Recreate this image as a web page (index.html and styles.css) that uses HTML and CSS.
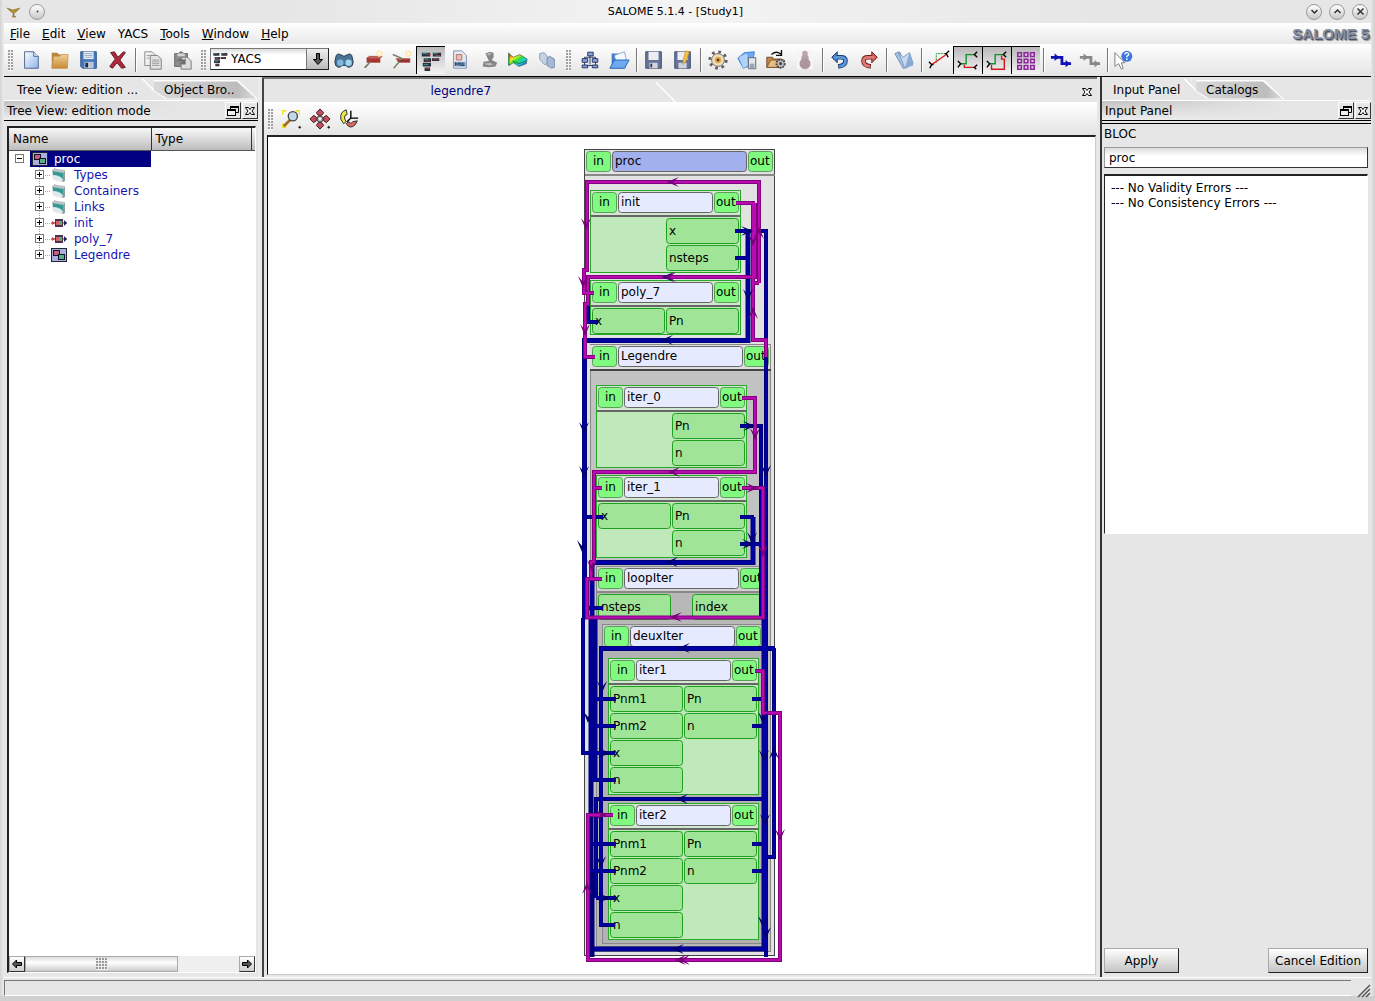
FILE: index.html
```html
<!DOCTYPE html>
<html lang="en">
<head>
<meta charset="utf-8">
<title>SALOME 5.1.4 - [Study1]</title>
<link rel="stylesheet" href="styles.css">
</head>
<body>
<svg class="defs" width="0" height="0" aria-hidden="true">
  <defs>
    <linearGradient id="gBlue" x1="0" y1="0" x2="1" y2="1"><stop offset="0" stop-color="#fff"/><stop offset="1" stop-color="#8ab4ea"/></linearGradient>
    <linearGradient id="gFolder" x1="0" y1="0" x2="0" y2="1"><stop offset="0" stop-color="#f0d09a"/><stop offset="1" stop-color="#c98a34"/></linearGradient>
    <linearGradient id="gRain" x1="0" y1="0" x2="1" y2="1"><stop offset="0" stop-color="#e22"/><stop offset=".3" stop-color="#ee2"/><stop offset=".5" stop-color="#2d4"/><stop offset=".7" stop-color="#2ce"/><stop offset="1" stop-color="#22c"/></linearGradient>
    <symbol id="folderTeal" viewBox="0 0 16 16"><path d="M1 3l3-2 2 1 8 1v11l-3 1L2 12z" fill="#b9c4c2"/><path d="M2 4l9 2v9l-9-3z" fill="#e2eae8"/><path d="M2 4l10 2v6Q8 8 2 8z" fill="#349a92"/><path d="M12 6l2-2v10l-2 1z" fill="#8ea19e"/></symbol>
    <symbol id="nodeIcon" viewBox="0 0 16 16"><path d="M0 8h16" stroke="#733"/><path d="M1 6l3 2-3 2z" fill="#c04048"/><path d="M13 5l3 3-3 3z" fill="#202060"/><rect x="4" y="4" width="8" height="8" fill="#503050"/><rect x="5" y="6" width="3" height="4" fill="#d86060"/><rect x="8" y="6" width="3" height="4" fill="#58b070"/></symbol>
    <symbol id="blocIcon" viewBox="0 0 16 16"><rect x=".5" y="1.5" width="15" height="13" fill="#a9b0de" stroke="#223"/><rect x="2.500" y="3.500" width="6" height="5" fill="#c46070" stroke="#113"/><rect x="7.500" y="7.500" width="6" height="5" fill="#58b080" stroke="#113"/></symbol>
    <symbol id="floatIcon" viewBox="0 0 12 12"><path d="M3.500 4V1.500h8v6h-3" fill="none" stroke="#000"/><rect x=".5" y="4.500" width="8" height="6" fill="#eee" stroke="#000"/><path d="M0 5h9M3 2h9" stroke="#000" stroke-width="2"/></symbol>
    <symbol id="closeIcon" viewBox="0 0 12 12"><path d="M1.500 2.500h3L6 4.500l1.500-2h3L8 6l2.500 3.500h-3L6 7.500l-1.500 2h-3L4 6z" fill="#fff" stroke="#000"/></symbol>
    <symbol id="meshIcon" viewBox="0 0 24 24"><path d="M2 3h9v4H2zM14 3h9v4h-9zM4 9h8v4H4zM13 9h8v3h-8zM3 14h9v4H3zM5 19h6v4H5z" fill="#27333c"/><path d="M3 4h5M15 4h4M5 10h4M4 16h5" stroke="#3fa0a0"/><path d="M8 5h4M17 6h5M6 12h5M14 10h6M6 20h5" stroke="#b03848"/></symbol>
  </defs>
</svg>
<div class="window">
  <header class="titlebar">
    <svg class="app-icon" width="14" height="14" viewBox="0 0 14 14"><path d="M0 3l6 2 7-2-4 4-2 1v3l2 1H5l1-1V8L3 6z" fill="#b8902c" stroke="#7a5c18" stroke-width=".5"/></svg>
    <button class="round" aria-label="Window menu"><svg width="13" height="13"><circle cx="6.500" cy="6.500" r="1" fill="#444"/></svg></button>
    <h1>SALOME 5.1.4 - [Study1]</h1>
    <button class="round" aria-label="Minimize"><svg width="13" height="13"><path d="M3.500 5l3 3 3-3" fill="none" stroke="#333" stroke-width="1.500"/></svg></button>
    <button class="round" aria-label="Maximize"><svg width="13" height="13"><path d="M3.500 8l3-3 3 3" fill="none" stroke="#333" stroke-width="1.500"/></svg></button>
    <button class="round" aria-label="Close"><svg width="13" height="13"><path d="M3.500 3.500l6 6m0-6l-6 6" fill="none" stroke="#333" stroke-width="1.500"/></svg></button>
  </header>

  <nav class="menubar">
    <a href="#"><u>F</u>ile</a><a href="#"><u>E</u>dit</a><a href="#"><u>V</u>iew</a><a href="#">YACS</a><a href="#"><u>T</u>ools</a><a href="#"><u>W</u>indow</a><a href="#"><u>H</u>elp</a>
    <span class="brand">SALOME 5</span>
  </nav>

  <div class="toolbar">
    <span class="handle first"></span>
    <button aria-label="New"><svg viewBox="0 0 24 24"><path d="M5 3h10l5 5v13H5z" fill="url(#gBlue)" stroke="#4c5e86"/><path d="M15 3v5h5" fill="#dfeafc" stroke="#4c5e86"/></svg></button>
    <button aria-label="Open"><svg viewBox="0 0 24 24"><path d="M3 4h6l2 2h9v15H3z" fill="#b9853c"/><path d="M5 8h7l2-2h7l-1 15H3z" fill="url(#gFolder)" stroke="#c08a40" stroke-width=".6"/></svg></button>
    <button aria-label="Save"><svg viewBox="0 0 24 24"><path d="M3 3h17v18H5l-2-2z" fill="#4478bd" stroke="#2d5187"/><path d="M6 3h11v8H6z" fill="#eef3fa"/><path d="M7 5h9M7 7h9M7 9h9" stroke="#8fa6c5"/><path d="M7 14h10v7H7z" fill="#bcc8d6"/><path d="M8 15h3v5H8z" fill="#1c2a44"/></svg></button>
    <button aria-label="Delete"><svg viewBox="0 0 24 24"><path d="M4 4l4-1 4 6 6-6 2 1-6 8 6 8-4 1-5-6-5 6-3-2 6-8z" fill="#b3283c" stroke="#56121c"/></svg></button>
    <span class="sep"></span>
    <button aria-label="Copy"><svg viewBox="0 0 24 24"><path d="M3 3h8l3 3v12H3z" fill="#f0f0f0" stroke="#888"/><path d="M9 7h8l4 4v11H9z" fill="#e4e4e4" stroke="#777"/><path d="M5 7h4M5 10h3M11 12h8M11 14h8M11 16h8M11 18h8" stroke="#999"/></svg></button>
    <button aria-label="Paste"><svg viewBox="0 0 24 24"><path d="M4 5h4q3-4 6 0h4v14H4z" fill="#8d8d8d" stroke="#666"/><path d="M7 5h8v3H7z" fill="#d5d5d5"/><path d="M11 9h7l4 4v9H11z" fill="#ddd" stroke="#777"/><path d="M5 14q5-6 9-2l2-2v7H9l3-3q-4-2-7 0z" fill="#707070"/></svg></button>
    <span class="handle"></span>
    <div class="module">
      <svg viewBox="0 0 24 24"><use href="#meshIcon"/></svg>
      <select aria-label="Module"><option>YACS</option></select>
      <span class="drop"><svg width="14" height="14" viewBox="0 0 14 14"><path d="M5.500 1.500h3v6h3L7 12.500 2.500 7.500h3z" fill="#555" stroke="#000"/></svg></span>
    </div>
    <button aria-label="Study"><svg viewBox="0 0 24 24"><path d="M3 9q1-5 5-3l4 2 4-2q4-2 5 3l1 5q0 5-4 6-3 0-4-2h-4q-1 2-4 2-4-1-4-6z" fill="#4c7393" stroke="#22384c"/><circle cx="8" cy="15" r="3.500" fill="#7db8dc"/><circle cx="17" cy="15" r="3.500" fill="#9cd4ee"/></svg></button>
    <button aria-label="Geometry"><svg viewBox="0 0 24 24"><path d="M5 10h15v5H5z" fill="#b33a34"/><path d="M5 10l3-2h14l-2 2zM6 13h13" fill="#db6f62" stroke="#7a2420" stroke-width=".6"/><path d="M2 20l7-7 1 1-6 7z" fill="#778062"/><circle cx="19" cy="5" r="3.500" fill="#ffe7b0"/><circle cx="19" cy="5" r="1.500" fill="#fff"/></svg></button>
    <button aria-label="Mesh"><svg viewBox="0 0 24 24"><path d="M5 10h16v5H8z" fill="#b3463e"/><path d="M2 6l9 4-3 5-5 6" stroke="#778062" fill="none" stroke-width="1.500"/><path d="M8 13h12" stroke="#5e2420"/><circle cx="19" cy="5" r="3.500" fill="#ffe7b0"/><circle cx="19" cy="5" r="1.500" fill="#fff"/></svg></button>
    <button class="on" aria-label="YACS module"><svg viewBox="0 0 24 24"><use href="#meshIcon"/></svg></button>
    <button aria-label="MED"><svg viewBox="0 0 24 24"><path d="M5 2h9l5 5v14H5z" fill="#e4e9f2" stroke="#7c8dac"/><path d="M8 6h6v6H8z" fill="#e5bdb7" stroke="#b96e64"/><path d="M6 14h12v5H6z" fill="#7898bd"/><path d="M7 18v-3l2 2 2-2v3M13 15v3h1M15 15v3h2" fill="none" stroke="#1c365e"/></svg></button>
    <button aria-label="Light"><svg viewBox="0 0 24 24"><path d="M8 5l5-2 4 1v5l-2 3 6 3-2 4-7 1-7-1 1-5 6-1z" fill="#858585"/><path d="M9 6l4-2 2 1-3 2zM6 16l7-1 4 2-5 1z" fill="#bbb"/></svg></button>
    <button aria-label="Post-Pro"><svg viewBox="0 0 24 24"><path d="M2 5l5 4 7-3 8 5-1 5-8 3-6-4-5 3z" fill="url(#gRain)" stroke="#333" stroke-width=".6"/><path d="M2 4v14M6 13l7 3 8-3" stroke="#157a35" fill="none"/></svg></button>
    <button aria-label="Hexa"><svg viewBox="0 0 24 24"><path d="M4 5l5-1 4 5v7l-4 1-5-6z" fill="#c5d2e2" stroke="#899cb5"/><path d="M12 10l3-2 5 3v9l-3 1-5-3z" fill="#a6bad5" stroke="#7388a5"/></svg></button>
    <span class="handle"></span>
    <button aria-label="New schema"><svg viewBox="0 0 24 24"><path d="M12 7v10M6 11v-2h12v2M6 13v5h12v-5" stroke="#26345c" fill="none"/><path d="M9.500 3.500h6v4h-6zM3.500 10.500h6v4h-6zM14.500 10.500h6v4h-6zM3.500 17.500h6v3h-6zM14.500 17.500h6v3h-6z" fill="#8aa2dc" stroke="#1c2c5c"/></svg></button>
    <button aria-label="Open schema"><svg viewBox="0 0 24 24"><path d="M4 5h7l2 2h6v14H4z" fill="#437cc5"/><path d="M7 7l11-4 2 9-11 3z" fill="#f4f8ff" stroke="#8fa9cf"/><path d="M2 21l5-9h16l-5 9z" fill="#6eaaf0" stroke="#2461b5"/></svg></button>
    <span class="sep"></span>
    <button aria-label="Save schema"><svg viewBox="0 0 24 24"><path d="M3 3h17v18H3z" fill="#66749a" stroke="#3b4668"/><path d="M6 3h11v9H6z" fill="#ececf1"/><path d="M7 15h9v6H7z" fill="#d1d4df"/><path d="M8 16h2v4H8z" fill="#334"/></svg></button>
    <button aria-label="Save schema as"><svg viewBox="0 0 24 24"><path d="M3 3h17v18H3z" fill="#66749a" stroke="#3b4668"/><path d="M6 3h11v9H6z" fill="#ececf1"/><path d="M7 15h9v6H7z" fill="#d1d4df"/><path d="M15 2l4 1-4 11-3 3v-5z" fill="#f5c044" stroke="#b9821c" stroke-width=".6"/></svg></button>
    <span class="sep"></span>
    <button aria-label="Run"><svg viewBox="0 0 24 24"><circle cx="12" cy="12" r="9" fill="none" stroke="#5e5e5e" stroke-width="3" stroke-dasharray="3 4.069"/><circle cx="12" cy="12" r="7" fill="#efdfb8" stroke="#666"/><circle cx="12" cy="12" r="3.500" fill="#d9a848"/><circle cx="12" cy="12" r="1.500" fill="#7a2010"/></svg></button>
    <button aria-label="Load state"><svg viewBox="0 0 24 24"><path d="M2 10l7-6 11-1-2 14-10 4z" fill="#6daaf2" stroke="#3d7dcf"/><path d="M3 9l9-4 1 13-5 3z" fill="#b0d3fb"/><path d="M13.500 9.500h8v12h-8z" fill="#e3e5ea" stroke="#58606e"/><path d="M15 16h5v5h-5z" fill="#9aa5b8"/></svg></button>
    <button aria-label="Batch"><svg viewBox="0 0 24 24"><path d="M2 9h6l2 2h8v9H2z" fill="#c08a50" stroke="#6a431b"/><path d="M6 12h15l-4 8H2z" fill="#e7bd84" stroke="#7a5226"/><path d="M7 6q6-5 11 0M18 1v6h-6" fill="none" stroke="#111" stroke-width="1.500"/><circle cx="17" cy="16" r="4.500" fill="#bbb" stroke="#444" stroke-width="2" stroke-dasharray="2 1"/><circle cx="17" cy="16" r="1.500" fill="#333"/></svg></button>
    <button aria-label="Watch"><svg viewBox="0 0 24 24"><path d="M3 2h18v20H3z" fill="#f8f3f4"/><circle cx="12" cy="5" r="3" fill="#baa7ad"/><circle cx="12" cy="10" r="4" fill="#b7a0a7"/><circle cx="12" cy="16" r="6" fill="#ae969e"/></svg></button>
    <span class="sep"></span>
    <button aria-label="Undo"><svg viewBox="0 0 24 24"><path d="M5 9h8q5 0 5 4 0 5-8 6" fill="none" stroke="#173a6e" stroke-width="5"/><path d="M9 3v12L3 9z" fill="#467fc4" stroke="#173a6e"/><path d="M6 9h7q5 0 5 4 0 5-7 6" fill="none" stroke="#5b97da" stroke-width="3"/></svg></button>
    <button aria-label="Redo"><svg viewBox="0 0 24 24"><path d="M19 9h-8q-5 0-5 4 0 5 8 6" fill="none" stroke="#701c1c" stroke-width="5"/><path d="M15 3v12l6-6z" fill="#d05a58" stroke="#701c1c"/><path d="M18 9h-7q-5 0-5 4 0 5 7 6" fill="none" stroke="#e07a74" stroke-width="3"/></svg></button>
    <span class="sep"></span>
    <button aria-label="Catalog"><svg viewBox="0 0 24 24"><path d="M2 5l5-2 9 17-5 1z" fill="#a5c1e4" stroke="#6d8cb7"/><path d="M6 4l5 5 7-5 4 12-9 5z" fill="#c7daf2" stroke="#7895bd"/><path d="M18 4l4 14-9 3z" fill="#88a9d5"/></svg></button>
    <span class="sep"></span>
    <button aria-label="Straight links"><svg viewBox="0 0 24 24"><path d="M9 15V5h9" stroke="#109020" stroke-dasharray="2 1" fill="none"/><path d="M4 17L20 6" stroke="#e21c1c" stroke-width="1.500"/><path d="M1 14l3 3-2 4M4 17h2M23 2l-3 3 2 4M18 5h3" stroke="#000" stroke-width="1.500" fill="none"/></svg></button>
    <button class="on" aria-label="Control links"><svg viewBox="0 0 24 24"><path d="M4 15h6V5h9" stroke="#109030" stroke-width="1.500" fill="none"/><path d="M8 16v3h11" stroke="#d01818" stroke-width="1.500" fill="none"/><path d="M1 12l3 3-3 4M22 2l-3 3 3 3M22 16l-3 3 2 2" stroke="#000" fill="none" stroke-width="1.500"/></svg></button>
    <button class="on" aria-label="Data links"><svg viewBox="0 0 24 24"><path d="M4 15h6V5h9" stroke="#109030" stroke-width="1.500" fill="none"/><path d="M6 16v5h14V10h-3V6" stroke="#d01818" stroke-width="1.500" fill="none"/><path d="M1 12l3 3-3 4M22 2l-3 3 3 3" stroke="#000" fill="none" stroke-width="1.500"/></svg></button>
    <button class="on" aria-label="Grid"><svg viewBox="0 0 24 24"><path d="M3 3h4v4H3zM10 3h4v4h-4zM17 3h4v4h-4zM3 10h4v4H3zM10 10h4v4h-4zM17 10h4v4h-4zM3 17h4v4H3zM10 17h4v4h-4zM17 17h4v4h-4z" fill="#e8c8e8" stroke="#8a2898" stroke-width="1.700"/></svg></button>
    <span class="sep"></span>
    <button aria-label="Emphasize links"><svg viewBox="0 0 24 24"><path d="M1 9h12v7h10" stroke="#1010b8" stroke-width="3" fill="none"/><path d="M5 5l5 4-5 4zM17 12l5 4-5 4z" fill="#1010b8"/></svg></button>
    <button aria-label="De-emphasize links"><svg viewBox="0 0 24 24"><path d="M1 9h12v7h10" stroke="#888" stroke-width="3" fill="none"/><path d="M5 5l5 4-5 4zM17 12l5 4-5 4z" fill="#888"/></svg></button>
    <span class="sep"></span>
    <button aria-label="What's this"><svg viewBox="0 0 24 24"><path d="M1 4v15l4-3 3 6 2-1-2-6h4z" fill="#fff" stroke="#777"/><circle cx="14" cy="8" r="6" fill="#3d78e0"/><path d="M12 6q0-2 2-2t2 2q0 1-2 2v1M14 10v2" stroke="#fff" stroke-width="1.500" fill="none"/></svg></button>
  </div>

  <main class="work">
    <aside class="dock">
      <div class="tabs">
        <button class="tab active wide">Tree View: edition ...</button>
        <button class="tab"><span>Object Bro..</span></button>
      </div>
      <div class="dock-title"><h2>Tree View: edition mode</h2>
        <button aria-label="Float"><svg width="12" height="12"><use href="#floatIcon"/></svg></button>
        <button aria-label="Close"><svg width="12" height="12"><use href="#closeIcon"/></svg></button></div>
      <div class="tree">
        <table>
          <thead><tr><th class="name">Name</th><th>Type</th><th class="rest"></th></tr></thead>
          <tbody>
            <tr class="root"><td><span class="row"><i class="box minus"></i><span class="sel"><svg width="16" height="16"><use href="#blocIcon"/></svg>proc</span></span></td><td></td><td></td></tr>
            <tr><td><span class="row sub"><i class="box"></i><svg width="16" height="16"><use href="#folderTeal"/></svg>Types</span></td><td></td><td></td></tr>
            <tr><td><span class="row sub"><i class="box"></i><svg width="16" height="16"><use href="#folderTeal"/></svg>Containers</span></td><td></td><td></td></tr>
            <tr><td><span class="row sub"><i class="box"></i><svg width="16" height="16"><use href="#folderTeal"/></svg>Links</span></td><td></td><td></td></tr>
            <tr><td><span class="row sub"><i class="box"></i><svg width="16" height="16"><use href="#nodeIcon"/></svg>init</span></td><td></td><td></td></tr>
            <tr><td><span class="row sub"><i class="box"></i><svg width="16" height="16"><use href="#nodeIcon"/></svg>poly_7</span></td><td></td><td></td></tr>
            <tr><td><span class="row sub last"><i class="box"></i><svg width="16" height="16"><use href="#blocIcon"/></svg>Legendre</span></td><td></td><td></td></tr>
          </tbody>
        </table>
        <div class="hscroll">
          <button aria-label="Scroll left"><svg width="12" height="12"><path d="M1.500 6l4-4v2.500h5v3h-5V10z" fill="#555" stroke="#000"/></svg></button>
          <span class="thumb"><i></i></span>
          <button aria-label="Scroll right"><svg width="12" height="12"><path d="M10.500 6l-4-4v2.500h-5v3h5V10z" fill="#555" stroke="#000"/></svg></button>
        </div>
      </div>
    </aside>

    <section class="view">
      <div class="view-tabs">
        <button class="view-tab">legendre7</button>
        <svg class="slant" width="20" height="24"><path d="M0 3.500l20 20" stroke="#fff" stroke-width="1.500"/></svg>
        <button class="view-close" aria-label="Close view"><svg width="12" height="12"><use href="#closeIcon"/></svg></button>
      </div>
      <div class="view-tools">
        <span class="handle first"></span>
        <button aria-label="Zoom"><svg viewBox="0 0 24 24"><path d="M3 7V3h4M17 3h4v4M3 17v4h4" fill="none" stroke="#eee018" stroke-width="1.500"/><path d="M4 20l7-7" stroke="#a36a28" stroke-width="3"/><circle cx="14" cy="9" r="5" fill="#bfdaea" stroke="#444" stroke-width="1.500"/><path d="M20 21h3M21.500 19.500v3" stroke="#000"/></svg></button>
        <button aria-label="Pan"><svg viewBox="0 0 24 24"><path d="M12 1l4 4-2 3h-4L8 5zM12 23l4-4-2-3h-4l-2 3zM1 12l4-4 3 2v4l-3 2zM23 12l-4-4-3 2v4l3 2z" fill="#c24e5c" stroke="#3a1218"/><path d="M9.500 9.500h5v5h-5z" fill="#eee" stroke="#222"/><path d="M20 21h3M21.500 19.500v3" stroke="#000"/></svg></button>
        <button aria-label="Rotate"><svg viewBox="0 0 24 24"><path d="M9 2q-7 2-6 10l3 5 3-2-2-4q0-4 3-4z" fill="#ece646" stroke="#222"/><path d="M9 17q4 7 10 1l2-4-5 1-2 2-2-2z" fill="#e06a5c" stroke="#222"/><path d="M14 3v8h8M14 11l-4 4" fill="none" stroke="#000" stroke-width="1.500"/></svg></button>
      </div>
      <div class="canvas">
        <svg class="schema" width="221" height="830" viewBox="571 140 221 830">
          <defs>
            <rect id="pin" x=".5" y=".5" width="24" height="20" rx="3"/>
            <rect id="cell" x=".5" y=".5" width="72" height="25" rx="3"/>
            <rect id="label" x=".5" y=".5" width="94" height="20" rx="3"/>
            <path id="al" d="M6-5L-6 0 6 5 0 0z"/>
            <g id="flow">
              <path d="M736 203h19M755 203v74H588v27h-3v53h10M736 203h17v80M759 283V182H587v88h-3v23h10M759 283h-6v57h13v17M742 398h13v74H594v90h-3v18M594 488h8M742 488h21v129.500H587V579h15M755 671h8v42h17v247H588V815h25"/>
            </g>
            <g id="dataThin">
              <path d="M735 231h31v726M735 258h13M588 290v32h10M583 618v135h32M740 426h21v191M586 517h17M740 517h14M740 544h22M586 608h17M601 648v277h14M774 648v209h-9M596 898V799h168M590 699h26M590 726h26M591 780h25M752 699h12M752 726h12M590 844h26M590 871h26M596 898h20M752 844h12M752 871h12"/>
            </g>
            <g id="dataWide">
              <path d="M748 231v109.500H584.500V618M753 517v45.500H592V620M599 648.500h176M764 618v332M594 949h171"/>
            </g>
          </defs>

          <g class="bloc">
            <rect x="584.500" y="149.500" width="190" height="806" fill="#e2e2e2" stroke="#444"/><path d="M585 175h190"/>
            <rect x="590.500" y="344.500" width="180" height="607" fill="#c2c2c2"/><path d="M590 345h180v25H590z" fill="#dedede" stroke="none"/><path d="M590 370h181" stroke="#444"/>
            <rect x="596.500" y="566.500" width="168" height="380" fill="#b8b8b8"/><path d="M597 567h167v25H597z" fill="#d0d0d0" stroke="none"/><path d="M597 592h167"/>
            <rect x="602.500" y="624.500" width="160" height="319" fill="#b2b2b2"/><path d="M603 625h159v24H603z" fill="#cacaca" stroke="none"/>
          </g>
          <g class="node">
            <rect x="590.500" y="190.500" width="150" height="82"/><rect x="590.500" y="280.500" width="150" height="54"/><rect x="596.500" y="385.500" width="150" height="82"/><rect x="596.500" y="475.500" width="150" height="82"/><rect x="608.500" y="658.500" width="150" height="136"/><rect x="608.500" y="803.500" width="150" height="136"/>
          </g>
          <g class="band">
            <path d="M591 191h149v25H591zM591 281h149v25H591zM597 386h149v25H597zM597 476h149v25H597zM609 659h149v25H609zM609 804h149v25H609z"/>
          </g>
          <path class="rule" d="M591 216h149M591 306h149M597 411h149M597 501h149M609 684h149M609 829h149"/>
          <g class="pins">
            <use href="#pin" x="586" y="151"/><use href="#pin" x="748" y="151"/>
            <use href="#pin" x="592" y="192"/><use href="#pin" x="714" y="192"/>
            <use href="#pin" x="592" y="282"/><use href="#pin" x="714" y="282"/>
            <use href="#pin" x="592" y="346"/><use href="#pin" x="744" y="346"/>
            <use href="#pin" x="598" y="387"/><use href="#pin" x="720" y="387"/>
            <use href="#pin" x="598" y="477"/><use href="#pin" x="720" y="477"/>
            <use href="#pin" x="598" y="568"/><use href="#pin" x="740" y="568"/>
            <use href="#pin" x="604" y="626"/><use href="#pin" x="736" y="626"/>
            <use href="#pin" x="610" y="660"/><use href="#pin" x="732" y="660"/>
            <use href="#pin" x="610" y="805"/><use href="#pin" x="732" y="805"/>
          </g>
          <g class="labels">
            <rect x="612.500" y="151.500" width="134" height="20" rx="3" fill="#a2b0ee"/>
            <use href="#label" x="618" y="192"/><use href="#label" x="618" y="282"/>
            <rect x="618.500" y="346.500" width="124" height="20" rx="3"/>
            <use href="#label" x="624" y="387"/><use href="#label" x="624" y="477"/>
            <rect x="624.500" y="568.500" width="114" height="20" rx="3"/>
            <rect x="630.500" y="626.500" width="104" height="20" rx="3"/>
            <use href="#label" x="636" y="660"/><use href="#label" x="636" y="805"/>
          </g>
          <g class="cells">
            <use href="#cell" x="666" y="218"/><use href="#cell" x="666" y="245"/>
            <use href="#cell" x="592" y="308"/><use href="#cell" x="666" y="308"/>
            <use href="#cell" x="672" y="413"/><use href="#cell" x="672" y="440"/>
            <use href="#cell" x="598" y="503"/><use href="#cell" x="672" y="503"/><use href="#cell" x="672" y="530"/>
            <use href="#cell" x="598" y="594"/><use href="#cell" x="692" y="594"/>
            <use href="#cell" x="610" y="686"/><use href="#cell" x="684" y="686"/><use href="#cell" x="610" y="713"/><use href="#cell" x="684" y="713"/><use href="#cell" x="610" y="740"/><use href="#cell" x="610" y="767"/>
            <use href="#cell" x="610" y="831"/><use href="#cell" x="684" y="831"/><use href="#cell" x="610" y="858"/><use href="#cell" x="684" y="858"/><use href="#cell" x="610" y="885"/><use href="#cell" x="610" y="912"/>
          </g>
          <g class="captions">
            <text x="593" y="165">in</text><text x="615" y="165">proc</text><text x="750" y="165">out</text>
            <text x="599" y="206">in</text><text x="621" y="206">init</text><text x="716" y="206">out</text>
            <text x="669" y="235">x</text><text x="669" y="262">nsteps</text>
            <text x="599" y="296">in</text><text x="621" y="296">poly_7</text><text x="716" y="296">out</text>
            <text x="595" y="325">x</text><text x="669" y="325">Pn</text>
            <text x="599" y="360">in</text><text x="621" y="360">Legendre</text><text x="746" y="360">out</text>
            <text x="605" y="401">in</text><text x="627" y="401">iter_0</text><text x="722" y="401">out</text>
            <text x="675" y="430">Pn</text><text x="675" y="457">n</text>
            <text x="605" y="491">in</text><text x="627" y="491">iter_1</text><text x="722" y="491">out</text>
            <text x="601" y="520">x</text><text x="675" y="520">Pn</text><text x="675" y="547">n</text>
            <text x="605" y="582">in</text><text x="627" y="582">loopIter</text><text x="742" y="582">out</text>
            <text x="601" y="611">nsteps</text><text x="695" y="611">index</text>
            <text x="611" y="640">in</text><text x="633" y="640">deuxIter</text><text x="738" y="640">out</text>
            <text x="617" y="674">in</text><text x="639" y="674">iter1</text><text x="734" y="674">out</text>
            <text x="613" y="703">Pnm1</text><text x="687" y="703">Pn</text><text x="613" y="730">Pnm2</text><text x="687" y="730">n</text><text x="613" y="757">x</text><text x="613" y="784">n</text>
            <text x="617" y="819">in</text><text x="639" y="819">iter2</text><text x="734" y="819">out</text>
            <text x="613" y="848">Pnm1</text><text x="687" y="848">Pn</text><text x="613" y="875">Pnm2</text><text x="687" y="875">n</text><text x="613" y="902">x</text><text x="613" y="929">n</text>
          </g>
          <use href="#dataThin" class="wire data-edge"/><use href="#dataWide" class="wire data-edge wide"/>
          <path class="wire bundle" d="M593 618v162"/><path class="wire data-edge wide" d="M591 780v90l1 1v86"/>
          <use href="#dataThin" class="wire data-core"/><use href="#dataWide" class="wire data-core wide"/>
          <use href="#flow" class="wire flow-edge"/><use href="#flow" class="wire flow-core"/>
          <g fill="#000070">
            <use href="#al" x="667" y="340"/><use href="#al" x="672" y="562"/><use href="#al" x="684" y="648"/><use href="#al" x="682" y="799"/><use href="#al" x="678" y="949"/><use href="#al" x="668" y="277"/>
            <use href="#al" transform="translate(584 428) rotate(-90)"/><use href="#al" transform="translate(584 472) rotate(-90)"/><use href="#al" transform="translate(582 546) rotate(-90)"/><use href="#al" transform="translate(748 295) rotate(-90)"/><use href="#al" transform="translate(766 471) rotate(-90)"/><use href="#al" transform="translate(588 717) rotate(-90)"/><use href="#al" transform="translate(602 687) rotate(-90)"/><use href="#al" transform="translate(763 718) rotate(-90)"/><use href="#al" transform="translate(764 756) rotate(-90)"/><use href="#al" transform="translate(774 753) rotate(90)"/><use href="#al" transform="translate(765 820) rotate(-90)"/><use href="#al" transform="translate(601 862) rotate(-90)"/><use href="#al" transform="translate(763 922) rotate(-90)"/><use href="#al" transform="translate(766 933) rotate(-90)"/><use href="#al" transform="translate(752 538) rotate(-90)"/>
            <use href="#al" transform="translate(749 426) rotate(180)"/><use href="#al" transform="translate(747 231) rotate(180)"/><use href="#al" transform="translate(748 544) rotate(180)"/><use href="#al" transform="translate(604 753) rotate(180)"/><use href="#al" transform="translate(604 898) rotate(180)"/>
          </g>
          <g fill="#780078">
            <use href="#al" x="673" y="182"/><use href="#al" x="670" y="277"/><use href="#al" x="674" y="472"/><use href="#al" x="676" y="617"/><use href="#al" x="680" y="960"/><use href="#al" x="684" y="960"/>
            <use href="#al" transform="translate(586 224) rotate(-90)"/><use href="#al" transform="translate(583 282) rotate(-90)"/><use href="#al" transform="translate(585 330) rotate(-90)"/><use href="#al" transform="translate(753 240) rotate(-90)"/><use href="#al" transform="translate(755 434) rotate(-90)"/><use href="#al" transform="translate(780 835) rotate(-90)"/><use href="#al" transform="translate(592 566) rotate(-90)"/><use href="#al" transform="translate(763 551) rotate(-90)"/>
            <use href="#al" transform="translate(753 313) rotate(90)"/><use href="#al" transform="translate(759 233) rotate(90)"/><use href="#al" transform="translate(587 888) rotate(90)"/><use href="#al" transform="translate(752 488) rotate(180)"/><use href="#al" transform="translate(601 815) rotate(180)"/>
          </g>
        </svg>
      </div>
    </section>

    <aside class="dock right">
      <div class="tabs">
        <button class="tab active">Input Panel</button>
        <button class="tab short"><span>Catalogs</span></button>
      </div>
      <div class="dock-title"><h2>Input Panel</h2>
        <button aria-label="Float"><svg width="12" height="12"><use href="#floatIcon"/></svg></button>
        <button aria-label="Close"><svg width="12" height="12"><use href="#closeIcon"/></svg></button></div>
      <form class="panel">
        <label for="bloc">BLOC</label>
        <input id="bloc" type="text" value="proc">
        <textarea aria-label="Errors" readonly>--- No Validity Errors ---
--- No Consistency Errors ---</textarea>
        <div class="actions"><button type="button" class="apply">Apply</button><button type="button" class="cancel">Cancel Edition</button></div>
      </form>
    </aside>
  </main>
  <footer class="status"><span></span><svg width="14" height="18"><path d="M1 17L13 5M5 17l8-8M9 17l4-4" stroke="#555" stroke-width="1.500"/></svg></footer>
</div>
</body>
</html>
```
FILE: styles.css
```css
* { box-sizing: border-box; }
body {
  margin: 0;
  background: #d0d0d0;
  color: #000;
  font: 12px/16px "DejaVu Sans", sans-serif;
}
.defs { position: absolute; }
button, input, select, textarea { font: inherit; color: inherit; margin: 0; padding: 0; border: 0; background: none; border-radius: 0; }
svg { display: block; flex: none; }
h1, h2 { margin: 0; font: inherit; }

.window {
  display: flex;
  flex-direction: column;
  min-height: 100vh;
  padding: 0 4px;
  border-bottom: 5px solid #d0d0d0;
  background: linear-gradient(90deg, #d4d4d4, #ebebeb 4px, #e6e6e6 calc(100% - 4px), #d0d0d0);
}
.titlebar { display: flex; align-items: center; gap: 7px; height: 23px; padding: 0 3px; background: linear-gradient(90deg, #e6e6e6, #e6e6e6 20%, #f4f4f4 50%, #e6e6e6 80%); }
.titlebar h1 { flex: 1; text-align: center; font-size: 11px; }
.app-icon { margin-right: 1px; }
.round { display: grid; place-items: center; width: 16px; height: 16px; border: 1px solid #999; border-radius: 50%; background: linear-gradient(#fff, #c8c8c8); }
.round svg { width: 13px; height: 13px; }

.menubar { display: flex; align-items: center; gap: 12px; height: 21px; padding: 0 2px 0 6px; background: linear-gradient(#fff, #e8e8e8); }
.menubar a { color: #000; text-decoration: none; }
.brand { margin-left: auto; font: bold 15px/20px "Liberation Sans", sans-serif; color: #8490a4; text-shadow: 1px 1px 1px #3c4456, 2px 2px 1px #999; }

.toolbar, .view-tools { display: flex; align-items: center; background: linear-gradient(#fff, #e4e4e4); }
.toolbar { height: 33px; border-bottom: 1px solid #000; }
.toolbar > button, .view-tools > button { display: grid; place-items: center; flex: none; width: 29px; height: 28px; }
.toolbar > button svg, .view-tools svg { width: 22px; height: 22px; }
.toolbar > .on { background: linear-gradient(#b8b8b8, #f4f4f4); border-top: 1px solid #000; border-left: 1px solid #000; }
.sep { flex: none; width: 6px; height: 24px; background: linear-gradient(90deg, transparent 3px, #777 3px, #777 4px, #fff 4px, #fff 5px, transparent 5px); }
.handle { flex: none; width: 14px; height: 21px; padding: 0 4px 0 5px; background: repeating-linear-gradient(90deg, transparent 0 2px, #f4f4f4 2px 3px) content-box, repeating-linear-gradient(#a0a0a0 0 2px, #f4f4f4 2px 3px) content-box; }
.handle.first { width: 12px; padding-right: 3px; padding-left: 4px; }
.module { display: grid; grid-template-columns: 20px 1fr 22px; align-items: center; width: 119px; height: 22px; margin-bottom: 2px; border: 1px solid #777; border-right-color: #222; border-bottom-color: #222; background: linear-gradient(#ddd, #fff 6px); }
.module > svg { grid-area: 1 / 1; width: 16px; height: 16px; margin-left: 1px; z-index: 1; }
.module select { grid-area: 1 / 1 / 2 / 4; appearance: none; width: 100%; height: 20px; padding-left: 20px; }
.drop { grid-area: 1 / 3; display: grid; place-items: center; height: 20px; border-left: 1px solid #777; background: linear-gradient(#eee, #bbb); pointer-events: none; }

.work { flex: 1; display: grid; grid-template-columns: 254px minmax(0, 1fr) 270px; gap: 4px; min-height: 0; }
.dock { display: flex; flex-direction: column; min-width: 0; padding-bottom: 4px; background: #e6e6e6; }
.dock.right { border-left: 2px solid #333; margin-left: -1px; }
.tabs { display: flex; height: 23px; padding-top: 2px; }
.tab { height: 19px; text-align: left; padding: 1px 0 0; white-space: nowrap; }
.tab.active { flex: none; height: 20px; width: 94px; padding-left: 11px; background: linear-gradient(45deg, transparent 47%, #fff 47%, #fff 55%, transparent 55%) right top / 12px 12px no-repeat; }
.tab.active.wide { width: 150px; padding-left: 13px; }
.tab:not(.active) { flex: 0 1 104px; margin-top: 1px; padding: 0; background: #fff; clip-path: polygon(0 0, calc(100% - 20px) 0, 100% 100%, 12px 100%, 0 60%); }
.tab.short:not(.active) { flex-basis: 88px; }
.tab:not(.active) span { display: block; height: 18px; padding: 1px 0 0 10px; background: linear-gradient(90deg, #d8d8d8, #bdbdbd 80%, #ddd); clip-path: polygon(0 1px, calc(100% - 21px) 1px, calc(100% - 2px) 100%, 13px 100%, 0 55%); }
.dock-title { display: flex; align-items: center; gap: 1px; height: 21px; padding-left: 3px; border-top: 1px solid #fff; border-bottom: 1px solid #000; background: linear-gradient(90deg, rgba(230,230,230,.2), #e6e6e6 70%), linear-gradient(#b8b8b8, #f2f2f2); }
.dock-title h2 { flex: 1; }
.dock-title button { display: grid; place-items: center; width: 16px; height: 17px; border: 1px solid #fff; border-right-color: #333; border-bottom-color: #333; background: #e6e6e6; }
.tree { flex: 1; display: flex; flex-direction: column; margin: 5px 2px 0 3px; border: 1px solid #fff; border-top: 2px solid #222; border-left: 2px solid #222; background: #fff; overflow: hidden; }
.tree table { width: 100%; table-layout: fixed; border-collapse: collapse; }
.tree th { height: 22px; padding: 0 4px; text-align: left; font-weight: normal; background: linear-gradient(#f8f8f8, #bdbdbd); border-right: 1px solid #333; border-bottom: 1px solid #555; }
.tree .name { width: 142px; }
.tree .rest { width: 4px; padding: 0; border-right: 0; }
.tree td { padding: 0; height: 16px; }
.row { display: flex; align-items: center; height: 16px; padding-left: 6px; color: #1414b4; white-space: nowrap; }
.row.sub { padding-left: 26px; }
.row.sub svg { margin: 0 7px; }
.sel { flex: 1; display: flex; align-items: center; gap: 6px; height: 16px; margin-left: 6px; padding-left: 2px; background: #000080; color: #fff; }
.box { width: 9px; height: 9px; border: 1px solid #777; background: linear-gradient(#000, #000) center / 5px 1px no-repeat, linear-gradient(#000, #000) center / 1px 5px no-repeat, #fff; }
.box.minus { background: linear-gradient(#000, #000) center / 5px 1px no-repeat, #fff; }
.row.sub { background: repeating-linear-gradient(#aaa 0 1px, transparent 1px 2px) 30px 0 / 1px 16px no-repeat, repeating-linear-gradient(90deg, #aaa 0 1px, transparent 1px 2px) 36px 8px / 6px 1px no-repeat; }
.row.sub.last { background-size: 1px 8px, 6px 1px; }
.hscroll { display: flex; height: 16px; margin-top: auto; background: #efefef; }
.hscroll button { display: grid; place-items: center; width: 16px; border: 1px solid #aaa; border-right-color: #333; border-bottom-color: #333; background: linear-gradient(#fff, #ccc); }
.hscroll .thumb { display: grid; place-items: center; width: 153px; margin-right: auto; border: 1px solid #aaa; background: linear-gradient(#ddd, #fff 40%, #ccc); }
.thumb i { width: 12px; height: 12px; background: repeating-linear-gradient(90deg, transparent 0 2px, #eee 2px 3px), repeating-linear-gradient(#999 0 2px, #eee 2px 3px); }

.view { display: flex; flex-direction: column; border-top: 2px solid #777; border-left: 2px solid #444; padding-bottom: 2px; background: #e6e6e6; }
.view-tabs { display: flex; height: 24px; border-bottom: 1px solid #fff; }
.view-tab { flex: 0 0 47%; padding-left: 2px; color: #000080; }
.view-close { margin: 2px 4px 0 auto; }
.view-tools { height: 32px; }
.canvas { flex: 1; display: flex; justify-content: center; padding-top: 3px; margin: 0 1px 0 3px; border-top: 2px solid #222; border-left: 1px solid #000; border-right: 1px solid #ccc; border-bottom: 1px solid #ccc; background: #fff; }

.schema { flex: none; }
.bloc { stroke: #888; }
.bloc path { stroke-width: 2; }
.node { fill: #bfe8bb; stroke: #28a828; }
.band { fill: #d2e6d0; }
.rule { stroke: #666; stroke-width: 2; }
.pins { fill: #80fb80; stroke: #5c9c5c; }
.labels { fill: #e6eaff; stroke: #666; }
.cells { fill: #a0e498; stroke: #1ea01e; }
.wire { fill: none; }
.data-edge { stroke: #000078; stroke-width: 4; }
.data-core { stroke: #0000a4; stroke-width: 2; }
.data-edge.wide { stroke-width: 5; }
.data-core.wide { stroke-width: 3; }
.bundle { stroke: #000090; stroke-width: 9; }
.flow-edge { stroke: #800080; stroke-width: 4; }
.flow-core { stroke: #b80cb0; stroke-width: 2; }

.panel { flex: 1; display: flex; flex-direction: column; margin: 2px 0 0; padding: 2px 3px 0 2px; border-top: 1px solid #000; }
.panel input { height: 21px; margin-top: 5px; padding: 0 4px; border: 1px solid #999; border-right-color: #333; border-bottom-color: #333; background: linear-gradient(#ddd, #fff 8px); }
.panel textarea { height: 360px; margin-top: 6px; padding: 5px 6px; line-height: 15px; border: 1px solid #fff; border-top: 2px solid #222; border-left: 1px solid #222; background: #fff; resize: none; }
.actions { display: flex; justify-content: space-between; margin-top: auto; }
.actions button { height: 25px; border: 1px solid #aaa; border-right-color: #222; border-bottom-color: #222; background: linear-gradient(#fff, #c4c4c4); }
.apply { width: 75px; }
.cancel { width: 100px; }

.status { display: flex; gap: 6px; height: 19px; padding-top: 2px; border-top: 1px solid #fff; background: #e6e6e6; }
.status span { flex: 1; border-top: 1px solid #777; border-left: 1px solid #777; border-bottom: 1px solid #fff; }
```
